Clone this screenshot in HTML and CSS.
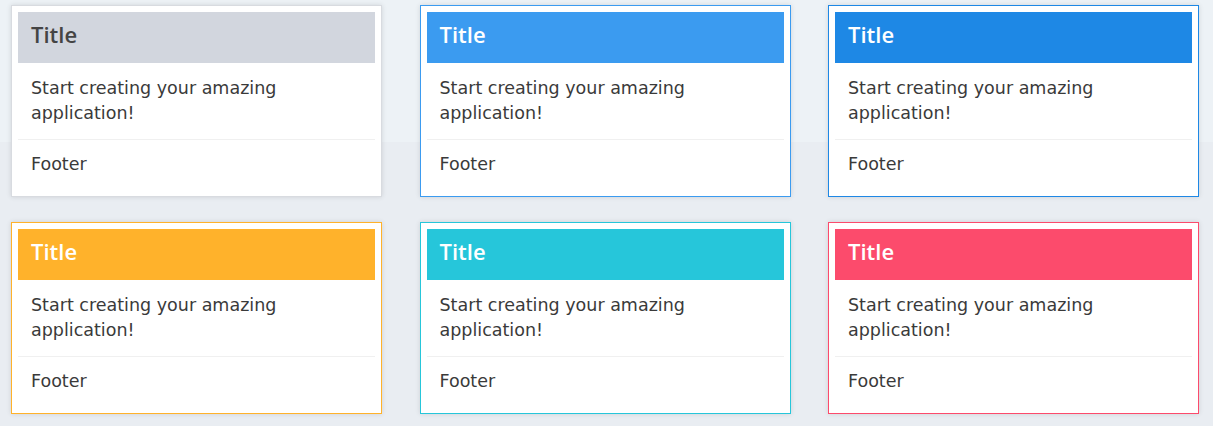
FILE: index.html
```html
<!DOCTYPE html>
<html lang="en">
<head>
  <meta charset="UTF-8" />
  <title>Boxes</title>
  <link rel="stylesheet" href="styles.css">
</head>
<body>

<div class="grid">
  <div class="box box-default">
    <div class="box-header">Title</div>
    <div class="box-body"><p>Start creating your amazing application!</p></div>
    <div class="box-footer">Footer</div>
  </div>

  <div class="box box-primary">
    <div class="box-header">Title</div>
    <div class="box-body"><p>Start creating your amazing application!</p></div>
    <div class="box-footer">Footer</div>
  </div>

  <div class="box box-info">
    <div class="box-header">Title</div>
    <div class="box-body"><p>Start creating your amazing application!</p></div>
    <div class="box-footer">Footer</div>
  </div>

  <div class="box box-warning">
    <div class="box-header">Title</div>
    <div class="box-body"><p>Start creating your amazing application!</p></div>
    <div class="box-footer">Footer</div>
  </div>

  <div class="box box-cyan">
    <div class="box-header">Title</div>
    <div class="box-body"><p>Start creating your amazing application!</p></div>
    <div class="box-footer">Footer</div>
  </div>

  <div class="box box-danger">
    <div class="box-header">Title</div>
    <div class="box-body"><p>Start creating your amazing application!</p></div>
    <div class="box-footer">Footer</div>
  </div>
</div>

</body>
</html>
```

FILE: styles.css
```css
body {
  font-family: 'DejaVu Sans', 'Open Sans', sans-serif;
  background: linear-gradient(#edf2f6 0, #edf2f6 142px, #e9edf2 142px);
  margin: 0;
  padding: 5px 14px 0 11px;
  color: #3a3a3a;
  min-height: 426px;
  box-sizing: border-box;
}
.grid {
  display: grid;
  grid-template-columns: repeat(3, 371px);
  column-gap: 37.5px;
  row-gap: 25px;
}
.box {
  background: #fff;
  border: 1px solid #d8dbe0;
  padding: 6px;
  box-shadow: 0 0 5px rgb(0 0 0 / 0.12);
}
.box-header {
  height: 51px;
  line-height: 45px;
  padding: 0 13px;
  font-family: 'Open Sans', 'DejaVu Sans', sans-serif;
  font-size: 22px;
  font-weight: 600;
  color: #fff;
}
.box-body {
  padding: 13px 13px;
  font-size: 17.5px;
  line-height: 25px;
  border-bottom: 1px solid #f0f0f0;
}
.box-body p {
  margin: 0;
  max-width: 290px;
}
.box-footer {
  padding: 12px 13px 13px;
  font-size: 17.5px;
  line-height: 25px;
}
.box-default .box-header {
  background: #d2d6de;
  color: #444;
}
.box-primary { border-color: #3b9bf0; }
.box-primary .box-header { background: #3b9bf0; }
.box-info { border-color: #1e88e5; }
.box-info .box-header { background: #1e88e5; }
.box-warning { border-color: #ffb22b; }
.box-warning .box-header { background: #ffb22b; }
.box-cyan { border-color: #26c6da; }
.box-cyan .box-header { background: #26c6da; }
.box-danger { border-color: #fc4b6c; }
.box-danger .box-header { background: #fc4b6c; }
```
